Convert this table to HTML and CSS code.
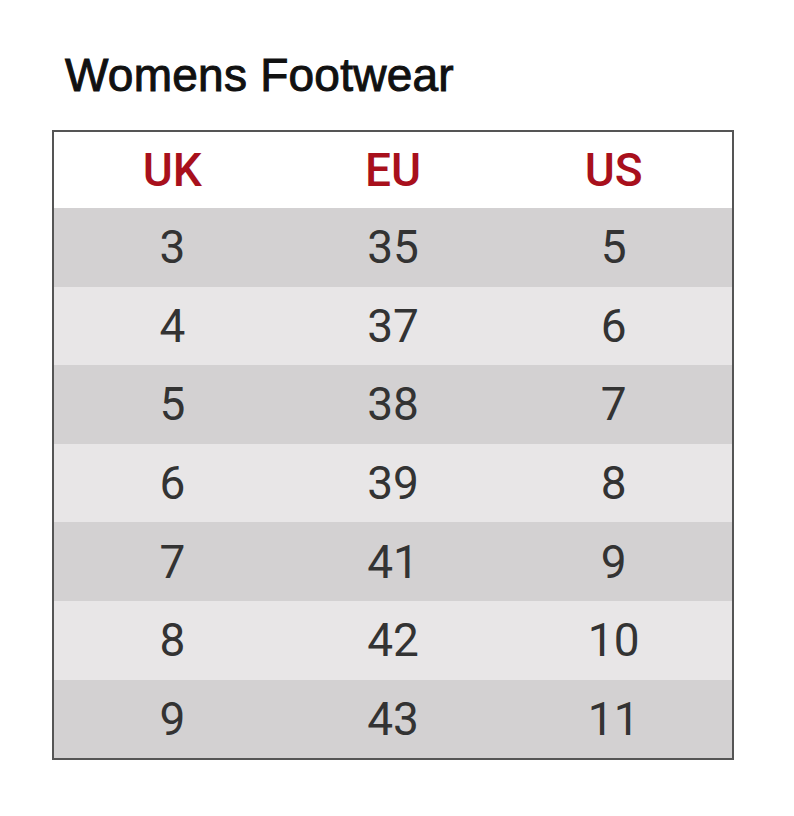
FILE: index.html
```html
<!DOCTYPE html>
<html lang="en">
<head>
<meta charset="utf-8">
<title>Womens Footwear</title>
<link rel="stylesheet" href="styles.css">
</head>
<body>
<div class="page">
  <h1 class="title">Womens Footwear</h1>
  <div class="chart">
    <div class="row head"><span>UK</span><span>EU</span><span>US</span></div>
    <div class="row dark"><span>3</span><span>35</span><span>5</span></div>
    <div class="row light"><span>4</span><span>37</span><span>6</span></div>
    <div class="row dark"><span>5</span><span>38</span><span>7</span></div>
    <div class="row light"><span>6</span><span>39</span><span>8</span></div>
    <div class="row dark"><span>7</span><span>41</span><span>9</span></div>
    <div class="row light"><span>8</span><span>42</span><span>10</span></div>
    <div class="row dark"><span>9</span><span>43</span><span>11</span></div>
  </div>
</div>
</body>
</html>
```
FILE: styles.css
```css
html, body {
  margin: 0;
  padding: 0;
  background: #ffffff;
}
.page {
  padding: 52px 0 0 52px;
}
.title {
  margin: 0 0 32px 13px;
  font-family: "Liberation Sans", Arial, sans-serif;
  font-size: 46px;
  line-height: 46px;
  font-weight: 400;
  letter-spacing: 0.25px;
  color: #111111;
  -webkit-text-stroke: 1px #111111;
}
.chart {
  width: 678px;
  border: 2px solid #555555;
}
.row {
  display: grid;
  grid-template-columns: 1fr 1fr 1fr;
  align-items: center;
  padding: 0 8px;
  height: 78.6px;
  font-family: Roboto, "Liberation Sans", sans-serif;
  font-size: 46px;
  color: #333333;
  text-align: center;
}
.row span {
  line-height: 1;
}
.head {
  height: 76px;
  background: #ffffff;
  color: #a8101c;
  font-weight: 500;
}
.dark {
  background: #d3d1d2;
}
.light {
  background: #e8e6e7;
}
```
